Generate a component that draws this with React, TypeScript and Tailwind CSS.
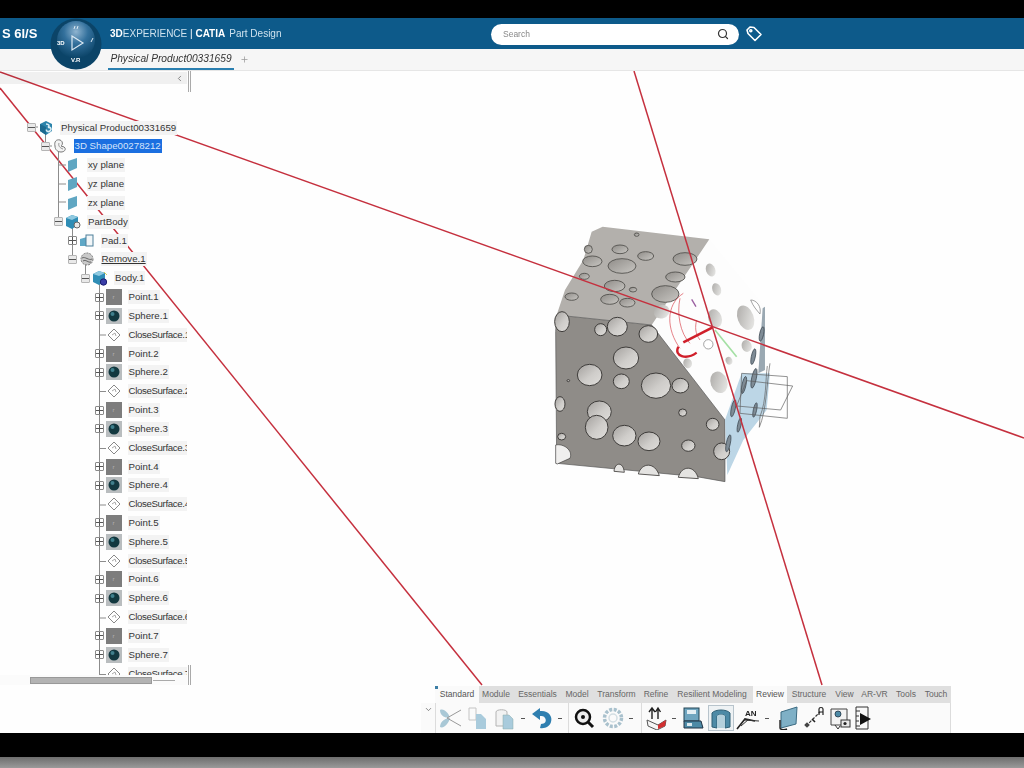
import { Search, Plus, ChevronLeft, ChevronDown } from "lucide-react";

const sans = "font-['Liberation_Sans',Arial,sans-serif]";

// ---- tree icons ----
const ProductIcon = () => (
  <svg width="16" height="16" viewBox="0 0 16 16">
    <path d="M2 4 L8 1 L14 4 L14 11 L8 15 L2 11 Z" fill="#2b83ab" />
    <path d="M2 4 L8 7 L8 15 L2 11 Z" fill="#1d6a90" />
    <path d="M8 4 C11 4 12 6 10 7.5 C13 7 14 9 12 11 C10 12.5 8 11 8.5 9.5" fill="none" stroke="#d9edf5" strokeWidth="1.6" />
  </svg>
);
const ShapeIcon = () => (
  <svg width="16" height="16" viewBox="0 0 16 16">
    <path d="M8 2 C4 1 2 4 3 8 C3 12 6 14 9 14 C12 14 14 12 13 10 C12 8 10 9 9 8 C11 7 11 3 8 2 Z" fill="#f4f4f4" stroke="#777" strokeWidth="1" />
    <path d="M7 5 C6 8 8 10 11 11" fill="none" stroke="#999" strokeWidth="1" />
  </svg>
);
const PlaneIcon = () => (
  <svg width="16" height="16" viewBox="0 0 16 16">
    <polygon points="3,4 12,1 12,11 3,15" fill="#5fa6c2" />
  </svg>
);
const BodyCube = ({ badge }: { badge: "gear" | "ring" }) => (
  <svg width="16" height="16" viewBox="0 0 16 16">
    <polygon points="1,4 7,1 13,3 13,11 7,15 1,12" fill="#2f8db5" />
    <polygon points="1,4 7,1 13,3 7,6" fill="#8fc9e0" />
    {badge === "gear" ? (
      <circle cx="12" cy="11" r="3" fill="#e8e8e8" stroke="#666" strokeWidth="1" />
    ) : (
      <>
        <path d="M12 2 L15 5" stroke="#d8d25a" strokeWidth="1" />
        <circle cx="11.5" cy="12" r="3.2" fill="#3a3ea8" stroke="#1d1f70" strokeWidth="1" />
      </>
    )}
  </svg>
);
const PadIcon = () => (
  <svg width="16" height="16" viewBox="0 0 16 16">
    <polygon points="1,6 8,4 8,13 1,13" fill="#5ea7c6" />
    <rect x="7" y="2" width="7" height="11" fill="#f2f6f8" stroke="#4d7f99" strokeWidth="1" />
  </svg>
);
const RemoveIcon = () => (
  <svg width="16" height="16" viewBox="0 0 16 16">
    <circle cx="8" cy="8" r="6" fill="#c9c9c9" stroke="#777" strokeWidth="1" strokeDasharray="2 1" />
    <path d="M3 7 C6 5 10 10 13 8 M4 10 C7 8 9 12 12 11" fill="none" stroke="#666" strokeWidth="1" />
  </svg>
);
const PointIcon = () => (
  <div className="flex h-[16px] w-[16px] items-center justify-center bg-[#7d7d7d] text-[6px] leading-none text-[#b5b5b5]">
    r
  </div>
);
const SphereIcon = () => (
  <svg width="16" height="16" viewBox="0 0 16 16">
    <rect width="16" height="16" fill="#b9bdbf" />
    <circle cx="8" cy="8" r="5.5" fill="#12383f" />
    <circle cx="6.5" cy="6" r="2" fill="#3f7f8c" />
  </svg>
);
const CloseIcon = () => (
  <svg width="16" height="16" viewBox="0 0 16 16">
    <polygon points="8,2 14,8 8,14 2,8" fill="#fff" stroke="#888" strokeWidth="1" />
    <path d="M6 8 L9 6 L10 9" fill="none" stroke="#aaa" strokeWidth="1" />
  </svg>
);

const Expander = ({ kind }: { kind?: "plus" | "minus" }) => (
  <div className="relative h-[9px] w-[9px] shrink-0">
    {kind && (
      <>
        <div className={`absolute inset-0 rounded-[1px] border ${kind === "plus" ? "border-[#8a8a8a]" : "border-[#b5b5b5] bg-[#e9e9e9]"}`} />
        <div className="absolute left-[1px] right-[1px] top-[4px] h-[1px] bg-[#555]" />
        {kind === "plus" && <div className="absolute bottom-[1px] left-[4px] top-[1px] w-[1px] bg-[#555]" />}
      </>
    )}
  </div>
);

type Row = {
  level: number;
  exp?: "plus" | "minus";
  icon: React.ReactNode;
  label: string;
  selected?: boolean;
  underline?: boolean;
  tight?: boolean;
};

const rows: Row[] = [
  { level: 0, exp: "minus", icon: <ProductIcon />, label: "Physical Product00331659" },
  { level: 1, exp: "minus", icon: <ShapeIcon />, label: "3D Shape00278212", selected: true },
  { level: 2, icon: <PlaneIcon />, label: "xy plane" },
  { level: 2, icon: <PlaneIcon />, label: "yz plane" },
  { level: 2, icon: <PlaneIcon />, label: "zx plane" },
  { level: 2, exp: "minus", icon: <BodyCube badge="gear" />, label: "PartBody" },
  { level: 3, exp: "plus", icon: <PadIcon />, label: "Pad.1" },
  { level: 3, exp: "minus", icon: <RemoveIcon />, label: "Remove.1", underline: true },
  { level: 4, exp: "minus", icon: <BodyCube badge="ring" />, label: "Body.1" },
];
for (let i = 1; i <= 7; i++) {
  rows.push({ level: 5, exp: "plus", icon: <PointIcon />, label: `Point.${i}` });
  rows.push({ level: 5, exp: "plus", icon: <SphereIcon />, label: `Sphere.${i}` });
  rows.push({ level: 5, icon: <CloseIcon />, label: `CloseSurface.${i}`, tight: true });
}

const TreeLines = () => (
  <svg className="absolute left-0 top-0" width="187" height="591" viewBox="0 84 187 591" stroke="#8c8c8c" strokeWidth="1">
    <path d="M45.5 127 V146 M38 127 H36" fill="none" />
    <path d="M58.5 146 V221 M50 146 H52 M58.5 165 H66 M58.5 184 H66 M58.5 202 H66" fill="none" />
    <path d="M72.5 221 V259 M85.5 259 V278 M99.5 278 V675" fill="none" />
    <path d="M99.5 335 H106 M99.5 391.5 H106 M99.5 448.5 H106 M99.5 505 H106 M99.5 561.5 H106 M99.5 618 H106 M99.5 674.5 H106" fill="none" />
  </svg>
);

const TreePanel = () => (
  <div className={`absolute left-0 top-0 flex h-[614px] w-[187px] flex-col overflow-hidden ${sans}`}>
    <div className="mt-[1px] flex h-[12px] shrink-0 items-center justify-end bg-[#f1f1f1] pr-[3px] text-[#666] mix-blend-multiply">
      <ChevronLeft size={9} />
    </div>
    <div className="relative min-h-0 flex-1 overflow-hidden pt-[34.2px]">
      <TreeLines />
      {rows.map((r) => (
        <div
          key={r.label}
          className="relative flex h-[18.83px] items-center whitespace-nowrap"
          style={{ paddingLeft: 27 + r.level * 13.5 }}
        >
          <Expander kind={r.exp} />
          <div className="ml-[2px] h-[16px] w-[16px] shrink-0">{r.icon}</div>
          <span
            className={`ml-[6px] px-[1px] text-[9.7px] leading-[14px] ${
              r.selected ? "bg-[#1b6fe0] text-[#d5e4fb]" : "bg-[#f3f3f3] text-[#333]"
            } ${r.underline ? "underline" : ""} ${r.tight ? "tracking-[-0.36px]" : ""}`}
          >
            {r.label}
          </span>
        </div>
      ))}
    </div>
    <div className="flex h-[10px] shrink-0 items-center bg-[#fbfbfb] pl-[30px]">
      <div className="h-[7px] w-[122px] border border-[#999] bg-[#b3b3b3]" />
      <div className="ml-[1px] h-[1px] w-[22px] bg-[#aaa]" />
    </div>
  </div>
);

// ---- 3D scene, coordinates follow the zoomed crop of the part ----
const topHoles = [
  [240, 118, 24, 13], [157, 154, 29, 16], [317, 138, 24, 13], [246, 168, 42, 22], [435, 147, 36, 19],
  [406, 201, 29, 15], [133, 199, 15, 9], [224, 228, 31, 17], [279, 239, 11, 7], [376, 252, 41, 25],
  [95, 260, 20, 11], [209, 268, 27, 15], [262, 278, 23, 13], [145, 118, 12, 12], [290, 74, 7, 5],
];
const frontHoles = [
  [258, 444, 38, 33], [149, 495, 37, 32], [244, 514, 24, 22], [348, 527, 44, 38], [421, 527, 25, 22],
  [178, 605, 36, 32], [170, 652, 34, 36], [253, 677, 35, 31], [327, 694, 33, 28], [445, 707, 20, 17],
  [428, 608, 12, 11], [518, 643, 19, 18], [545, 724, 24, 25], [65, 680, 12, 10], [182, 359, 18, 18],
  [232, 350, 30, 28], [325, 372, 28, 25], [66, 335, 22, 30], [60, 582, 15, 22], [85, 512, 4, 3],
];
const whiteHoles = [
  [512, 180, 14, 20], [530, 238, 13, 19], [525, 325, 20, 28], [617, 323, 24, 38], [620, 408, 15, 18],
  [443, 460, 13, 15], [537, 517, 25, 33], [567, 452, 10, 12], [365, 305, 24, 20],
];
const blueHoles = [
  [665, 372, 6, 22], [640, 440, 6, 24], [612, 525, 6, 26], [642, 505, 7, 30], [580, 595, 6, 26],
  [645, 600, 5, 22], [598, 645, 5, 22], [565, 700, 6, 26],
];

const Part = () => (
  <g transform="translate(540 210) scale(0.3333)">
    <defs>
      <linearGradient id="holeFront" x1="0" y1="0" x2="1" y2="1">
        <stop offset="0%" stopColor="#a3a09d" />
        <stop offset="55%" stopColor="#cfcdca" />
        <stop offset="100%" stopColor="#e0dedb" />
      </linearGradient>
      <linearGradient id="holeTop" x1="0" y1="0" x2="1" y2="1">
        <stop offset="0%" stopColor="#8f8c88" />
        <stop offset="100%" stopColor="#c9c7c3" />
      </linearGradient>
      <linearGradient id="holeWhite" x1="0" y1="0" x2="1" y2="1">
        <stop offset="0%" stopColor="#a9a7a4" />
        <stop offset="100%" stopColor="#eeeeec" />
      </linearGradient>
    </defs>
    {/* faces */}
    <polygon points="155,65 188,50 508,88 675,290 675,480 560,640 330,345" fill="#fdfdfd" />
    <polygon points="155,65 188,50 508,88 335,345 50,315 75,240 130,150" fill="#b3b0ac" />
    <polygon points="47,365 50,315 335,345 555,630 555,815 470,800 50,760" fill="#8f8c88" stroke="#555" strokeWidth="2" />
    <polygon points="668,295 675,290 675,480 655,490" fill="#9aa8b2" />
    <polygon points="605,490 690,490 680,600 610,690 562,795 555,630" fill="#bcd6e6" />
    {topHoles.map((h) => (
      <ellipse key={h.join()} cx={h[0]} cy={h[1]} rx={h[2]} ry={h[3]} fill="url(#holeTop)" stroke="#4c4a47" strokeWidth="2.5" />
    ))}
    {frontHoles.map((h) => (
      <ellipse key={h.join()} cx={h[0]} cy={h[1]} rx={h[2]} ry={h[3]} fill="url(#holeFront)" stroke="#3d3b39" strokeWidth="3" />
    ))}
    {whiteHoles.map((h) => (
      <ellipse key={h.join()} cx={h[0]} cy={h[1]} rx={h[2]} ry={h[3]} transform={`rotate(-20 ${h[0]} ${h[1]})`} fill="url(#holeWhite)" />
    ))}
    <path d="M632 270 C650 270 665 290 660 312 C650 300 640 290 632 270 Z" fill="#fff" stroke="#777" strokeWidth="2" />
    {blueHoles.map((h) => (
      <ellipse key={h.join()} cx={h[0]} cy={h[1]} rx={h[2]} ry={h[3]} transform={`rotate(12 ${h[0]} ${h[1]})`} fill="#7f8c96" stroke="#333f48" strokeWidth="2" />
    ))}
    {/* notches along the bottom edge */}
    <path d="M47 705 C70 700 100 720 90 745 L52 762 L47 760 Z" fill="#f0efee" stroke="#3d3b39" strokeWidth="2" />
    <path d="M295 792 C305 757 345 755 358 797 Z M415 802 C425 765 465 765 475 806 Z M222 784 C225 755 250 755 253 787 Z" fill="#e4e3e1" stroke="#3d3b39" strokeWidth="2.5" />
    {/* reference planes */}
    <g fill="none" stroke="#5c5c5c" strokeWidth="2">
      <polygon points="620,512 758,528 722,600 590,588" />
      <polygon points="605,490 742,500 742,625 600,610" />
      <path d="M690 460 C680 520 680 600 658 652 L660 620 C680 570 676 510 682 468" />
    </g>
    {/* manipulator */}
    <path d="M525 360 L590 440" stroke="#a4e0a4" strokeWidth="5" />
    <g fill="none" stroke="#d8434c" strokeWidth="2">
      <path d="M430 250 C375 285 380 360 420 415" />
      <path d="M420 265 C410 310 420 370 450 400" />
      <path d="M470 330 C465 350 465 370 480 390" />
    </g>
    <path d="M430 397 L518 352" stroke="#d01f2a" strokeWidth="8" />
    <path d="M415 410 C400 440 440 450 470 428" fill="none" stroke="#d01f2a" strokeWidth="7" />
    <path d="M455 268 L468 290" stroke="#9a5fa0" strokeWidth="4" />
    <circle cx="505" cy="403" r="14" fill="#fff" stroke="#777" strokeWidth="2" />
  </g>
);

const Scene = () => (
  <svg className="absolute left-0 top-0" width="1024" height="662" viewBox="0 71 1024 662">
    <Part />
    <g stroke="#c5303e" strokeWidth="1.5">
      <line x1="0" y1="72" x2="1024" y2="438" />
      <line x1="0" y1="88" x2="482" y2="685" />
      <line x1="634" y1="71" x2="822" y2="685" />
    </g>
  </svg>
);

// ---- toolbar icons ----
const T = ({ children, w = 24 }: { children: React.ReactNode; w?: number }) => (
  <svg width={w} height="24" viewBox={`0 0 ${w} 24`}>
    {children}
  </svg>
);
const Dash = () => <div className="mx-[4px] h-[1px] w-[4px] shrink-0 bg-[#555]" />;
const Sep = () => <div className="h-full w-[1px] shrink-0 bg-[#dcdcdc]" />;

const ScissorsIcon = () => (
  <T>
    <path d="M2 4 C6 2 10 7 12 11 C8 13 2 10 2 4 Z M2 21 C2 15 8 12 12 12 C11 17 6 23 2 21 Z" fill="#a9c8d6" />
    <path d="M9 12 L23 4 M9 12 L23 20" stroke="#999" strokeWidth="1" />
  </T>
);
const CopyIcon = () => (
  <T>
    <path d="M4 2 H11 V14 H4 Z" fill="#fafafa" stroke="#c4c4c4" strokeWidth="1" />
    <path d="M11 8 H16 L21 13 V23 H11 Z" fill="#a9cbdc" />
  </T>
);
const PasteIcon = () => (
  <T>
    <path d="M3 6 C3 3 14 3 14 6 V20 H3 Z" fill="#f2f2f2" stroke="#b4b4b4" strokeWidth="1" />
    <path d="M10 9 H16 L20 13 V23 H10 Z" fill="#a9cbdc" stroke="#8aa" strokeWidth="0.5" />
  </T>
);
const UndoIcon = () => (
  <T>
    <path d="M2 8 L10 2 V5 C18 4 23 10 21 16 C20 20 15 23 10 22 L11 18 C15 18 17 15 15 12 C14 10 12 10 10 10 V14 Z" fill="#2f7fb0" />
  </T>
);
const ZoomIcon = () => (
  <T>
    <circle cx="11" cy="11" r="7" fill="#eee" stroke="#111" strokeWidth="2.5" />
    <circle cx="11" cy="11" r="2" fill="#111" />
    <path d="M16 16 L21 21" stroke="#111" strokeWidth="3" />
  </T>
);
const ViewIcon = () => (
  <T>
    <circle cx="12" cy="12" r="8.5" fill="none" stroke="#a9c1cd" strokeWidth="3.5" strokeDasharray="3 1.5" />
    <circle cx="12" cy="12" r="4" fill="none" stroke="#d3dee3" strokeWidth="1.5" />
  </T>
);
const BoxArrows = () => (
  <T>
    <path d="M3 14 L14 19 L22 14 L21 20 L13 24 L4 20 Z" fill="#f5f5f5" stroke="#555" strokeWidth="1" />
    <path d="M14 19 L22 14 L21 20 L14 23 Z" fill="#d12f30" />
    <path d="M8 13 V4 M5 6 L8 2 L11 6 M14 13 V4 M11.5 6 L14 2 L16.5 6" fill="none" stroke="#222" strokeWidth="1.4" />
  </T>
);
const MachineIcon = () => (
  <T>
    <rect x="3" y="2" width="15" height="13" fill="#6fa5bf" stroke="#245" strokeWidth="1" />
    <rect x="6" y="4" width="9" height="4" fill="#e4eff4" />
    <path d="M3 15 H20 L22 22 H3 Z" fill="#4d8aa6" stroke="#234" strokeWidth="1" />
    <rect x="6" y="17" width="5" height="3" fill="#dbe8ee" />
  </T>
);
const SurfaceIcon = () => (
  <T>
    <path d="M3 7 C6 3 18 3 21 7 V21 L16 22 V10 C14 8 10 8 8 10 V22 L3 21 Z" fill="#4d8aa6" stroke="#2f5f75" strokeWidth="1" />
    <path d="M8 10 C10 8 14 8 16 10 V22 H8 Z" fill="#b4d0dc" />
  </T>
);
const AnnotIcon = () => (
  <T w={26}>
    <path d="M2 23 L10 13 L20 15" fill="none" stroke="#222" strokeWidth="1.6" />
    <path d="M9 14 L24 15 M6 20 L14 13" stroke="#333" strokeWidth="1" />
    <text x="10" y="10" fontSize="8" fontWeight="700" fill="#222" fontFamily="Liberation Sans">AN</text>
  </T>
);
const SheetIcon = () => (
  <T>
    <polygon points="6,6 22,1 21,18 6,22" fill="#7fb0c6" stroke="#3c6b82" strokeWidth="1" />
    <path d="M5 14 V22 C5 24 10 24 12 23" fill="none" stroke="#222" strokeWidth="1.4" />
  </T>
);
const MeasureIcon = () => (
  <T>
    <path d="M4 20 L18 6" stroke="#333" strokeWidth="1.2" strokeDasharray="3 1.5" />
    <rect x="3" y="17" width="4" height="4" fill="#444" transform="rotate(45 5 19)" />
    <path d="M17 9 V3 C17 1 21 1 21 3 V9 M17 6 H21" fill="none" stroke="#222" strokeWidth="1.2" />
    <path d="M10 13 L13 16" stroke="#222" strokeWidth="1.6" />
  </T>
);
const CaptureIcon = () => (
  <T>
    <path d="M3 3 H19 V15 L14 19 H3 Z" fill="#f3f3f3" stroke="#444" strokeWidth="1" />
    <circle cx="10" cy="8" r="3" fill="#4d8aa6" stroke="#234" strokeWidth="0.8" />
    <rect x="13" y="14" width="9" height="7" fill="#e8e8e8" stroke="#333" strokeWidth="1" />
    <circle cx="17" cy="17.5" r="1.6" fill="#222" />
    <path d="M7 19 L10 23 L12 20" fill="none" stroke="#333" strokeWidth="1" />
  </T>
);
const PlayerIcon = () => (
  <T>
    <path d="M4 1 H16 V23 H4 Z" fill="#f8f8f8" stroke="#333" strokeWidth="1" />
    <path d="M8 7 L19 13 L8 19 Z" fill="#111" />
    <path d="M4 5 H8 M4 10 H7 M4 15 H7 M4 20 H8" stroke="#333" strokeWidth="1" />
  </T>
);

const tabs = [
  { name: "Standard", w: "w-[44px]", active: true },
  { name: "Module", w: "w-[34px]" },
  { name: "Essentials", w: "w-[49px]" },
  { name: "Model", w: "w-[30px]" },
  { name: "Transform", w: "w-[49px]" },
  { name: "Refine", w: "w-[30px]" },
  { name: "Resilient Modeling", w: "w-[82px]" },
  { name: "Review", w: "w-[34px]", active: true },
  { name: "Structure", w: "w-[44px]" },
  { name: "View", w: "w-[27px]" },
  { name: "AR-VR", w: "w-[33px]" },
  { name: "Tools", w: "w-[30px]" },
  { name: "Touch", w: "w-[30px]" },
];

const Toolbar = () => (
  <div className={`absolute left-[421px] top-[615px] flex w-[530px] flex-col ${sans}`}>
    <div className="relative ml-[14px] flex h-[17px] bg-[#dfdfdf]">
      {tabs.map((t) => (
        <div
          key={t.name}
          className={`${t.w} flex items-center justify-center whitespace-nowrap text-[8.5px] ${
            t.active ? "bg-[#fafafa] text-[#555]" : "text-[#666]"
          }`}
        >
          {t.name}
        </div>
      ))}
      <div className="absolute left-0 top-0 h-[3px] w-[3px] bg-[#3d7fa6]" />
    </div>
    <div className="flex h-[30px] items-center border-r border-[#dcdcdc] bg-[#fafafa]">
      <div className="flex h-full w-[14px] shrink-0 justify-center pt-[2px] text-[#666]">
        <ChevronDown size={9} />
      </div>
      <Sep />
      <div className="flex h-full items-center pl-[2px] pr-[2px]">
        <ScissorsIcon />
        <div className="ml-[3px]"><CopyIcon /></div>
        <div className="ml-[4px]"><PasteIcon /></div>
        <Dash />
        <div className="ml-[1px]"><UndoIcon /></div>
        <Dash />
      </div>
      <Sep />
      <div className="flex h-full items-center pl-[3px] pr-[4px]">
        <ZoomIcon />
        <div className="ml-[5px]"><ViewIcon /></div>
        <Dash />
      </div>
      <Sep />
      <div className="flex h-full items-center pl-[2px]">
        <BoxArrows />
        <Dash />
        <div className="ml-[1px]"><MachineIcon /></div>
        <div className="ml-[3px] flex h-[26px] w-[26px] items-center justify-center border border-[#b8c4cc] bg-[#eef2f4]">
          <SurfaceIcon />
        </div>
        <div className="ml-[1px]"><AnnotIcon /></div>
        <Dash />
        <div className="ml-[2px]"><SheetIcon /></div>
        <div className="ml-[3px]"><MeasureIcon /></div>
        <div className="ml-[2px]"><CaptureIcon /></div>
        <PlayerIcon />
      </div>
    </div>
  </div>
);

const Compass = () => (
  <svg className="absolute left-[50px] top-[18px]" width="52" height="52" viewBox="0 0 52 52">
    <defs>
      <radialGradient id="cmp" cx="50%" cy="28%" r="70%">
        <stop offset="0%" stopColor="#8fb4d0" />
        <stop offset="45%" stopColor="#33709c" />
        <stop offset="100%" stopColor="#0b4468" />
      </radialGradient>
    </defs>
    <circle cx="26" cy="26" r="25.5" fill="#0b4468" />
    <circle cx="26" cy="22" r="19" fill="url(#cmp)" />
    <path d="M22 18 L33 25 L22 32 Z" fill="none" stroke="#dbe9f3" strokeWidth="1.2" />
    <path d="M25 8 L24 11 M28 8 L27 11 M43 20 L41 24" stroke="#dbe9f3" strokeWidth="1" />
    <text x="7" y="27" fontSize="6" fontWeight="700" fill="#fff" fontFamily="Liberation Sans">3D</text>
    <text x="21" y="44" fontSize="6" fontWeight="700" fill="#fff" fontFamily="Liberation Sans">V.R</text>
  </svg>
);

const TagIcon = () => (
  <svg width="18" height="18" viewBox="0 0 18 18" fill="none" stroke="#fff" strokeWidth="1.6" strokeLinejoin="round">
    <path d="M2 5 L5 2 L9 2.5 L16 9.5 L10 15.5 L3 8.5 Z" />
    <circle cx="5.8" cy="5.8" r="1" />
  </svg>
);

export default function App() {
  return (
    <div className={`relative flex h-[768px] w-[1024px] flex-col overflow-hidden bg-black blur-[0.4px] ${sans}`}>
      <div className="h-[18px] shrink-0 bg-black" />
      <header className="flex h-[31px] shrink-0 items-center bg-[#0d5a8a] text-white">
        <div className="w-[110px] pl-[2px] text-[13px] font-bold leading-none">S 6l/S</div>
        <div className="w-[381px] whitespace-nowrap pb-[1px] text-[10px]">
          <span className="font-bold">3D</span>
          <span className="text-[#cfe2ee]">EXPERIENCE</span>
          <span> | </span>
          <span className="font-bold">CATIA</span>
          <span className="ml-[4px] text-[#cfe2ee]">Part Design</span>
        </div>
        <div className="mt-[1px] flex h-[21px] w-[248px] items-center justify-between rounded-full bg-white pl-[12px] pr-[10px]">
          <span className="text-[8.5px] text-[#888]">Search</span>
          <Search size={12} strokeWidth={2.4} className="text-[#333]" />
        </div>
        <div className="ml-[6px]"><TagIcon /></div>
      </header>
      <div className="flex h-[22px] shrink-0 items-stretch border-b border-[#e6e6e6] bg-[#f6f6f6] pl-[108px]">
        <div className="flex w-[126px] items-center justify-center border-b-2 border-[#2a7fb0] pt-[1px] text-[10.2px] italic text-[#333]">
          Physical Product00331659
        </div>
        <div className="ml-[6px] flex items-center text-[#999]">
          <Plus size={9} />
        </div>
      </div>
      <main className="relative min-h-0 flex-1 bg-[#fefefe]">
        <Scene />
        <TreePanel />
        <div className="absolute left-[188px] top-0 h-[21px] w-[3px] border-x border-[#aaa]" />
        <div className="absolute left-[188px] top-[594px] h-[20px] w-[3px] border-x border-[#aaa]" />
        <Toolbar />
      </main>
      <div className="h-[24px] shrink-0 bg-black" />
      <div className="h-[11px] shrink-0 bg-gradient-to-b from-[#6e6e6e] to-[#9a9a9a]" />
      <Compass />
    </div>
  );
}
